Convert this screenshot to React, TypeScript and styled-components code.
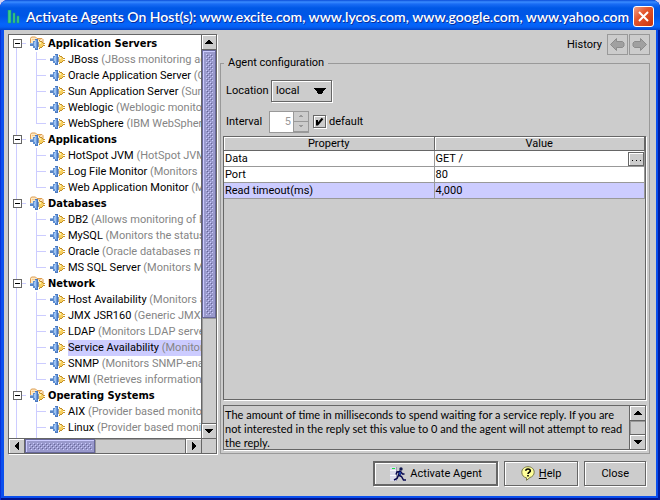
import React from 'react';
import styled, { createGlobalStyle, css } from 'styled-components';

const c = {
  face: '#cccccc',
  dark: '#666666',
  mid: '#999999',
  light: '#ffffff',
  purple: '#9999cc',
  purpleDark: '#666699',
  select: '#ccccff',
};

const Global = createGlobalStyle`
  *, *::before, *::after { box-sizing: border-box; }
  html { background: #d6d3f4; }
  body { margin: 0; font: 11px/14px Roboto, "Liberation Sans", sans-serif; color: #000; overflow: hidden; }
  button, input, select { font: inherit; color: inherit; margin: 0; padding: 0; border-radius: 0; }
  svg { display: block; flex: none; }
`;

const Window = styled.div`
  display: flex;
  flex-direction: column;
  height: 100vh;
  padding: 0 4px 4px;
  border-radius: 8px 8px 0 0;
  background: #0a4fee;
  box-shadow: inset 1px 0 #0831d9, inset -2px 0 #001ea0, inset 0 -2px #001590;
  overflow: hidden;
`;

const TitleBar = styled.header`
  display: flex;
  align-items: center;
  flex: none;
  height: 30px;
  margin: 0 -4px;
  padding: 3px 6px 0 7px;
  gap: 6px;
  color: #fff;
  background: linear-gradient(#0a4cd8 0, #3a8cff 2px, #1a6cf4 4px, #0058e6 8px, #0055e5 16px, #0465fb 24px, #0560f4 27px, #0044cc 30px);
`;

const Title = styled.h1`
  flex: 1;
  min-width: 0;
  margin: 0;
  font: 600 14px/18px Lato, sans-serif;
  white-space: nowrap;
  text-shadow: 1px 1px #0a2f9c;
`;

const CloseBox = styled.button`
  display: grid;
  place-items: center;
  flex: none;
  width: 21px;
  height: 21px;
  border: 1px solid #fff;
  border-radius: 3px;
  background: linear-gradient(135deg, #f0a088, #e4562e 40%, #c8330c);
`;

const Body = styled.main`
  display: flex;
  flex-direction: column;
  flex: 1;
  min-height: 0;
  padding: 4px 6px 10px 4px;
  background: ${c.face};
`;

const Columns = styled.div`
  display: flex;
  flex: 1;
  min-height: 0;
  gap: 3px;
`;

const etched = css`
  border: 1px solid ${c.dark};
  box-shadow: 1px 1px ${c.light};
`;

const TreePanel = styled.nav`
  ${etched}
  display: grid;
  grid-template: minmax(0, 1fr) 15px / minmax(0, 1fr) 15px;
  flex: none;
  width: 209px;
  background: ${c.face};
`;

const Tree = styled.ul`
  margin: 0;
  padding: 1px 0 0;
  list-style: none;
  overflow: hidden;
  background: #fff;
`;

const Branch = styled.ul`
  margin: 0;
  padding: 0;
  list-style: none;
`;

const TreeRow = styled.div`
  display: flex;
  align-items: center;
  height: 16px;
  white-space: nowrap;
`;

const line = `linear-gradient(${c.select}, ${c.select})`;

const Trunk = styled.span<{ $start?: boolean; $joint?: boolean }>`
  display: flex;
  align-items: center;
  flex: none;
  width: 20px;
  height: 16px;
  padding: 0 0 1px 4px;
  background: ${line} 7px ${p => (p.$start ? '8px' : '0')} / 1px 16px no-repeat,
    ${line} 13px 7px / ${p => (p.$joint ? '4px' : '0')} 1px no-repeat;
`;

const Elbow = styled.span<{ $last: boolean }>`
  flex: none;
  width: 20px;
  height: 16px;
  background: ${line} 7px 0 / 1px ${p => (p.$last ? '8px' : '16px')} no-repeat,
    ${line} 7px 7px / 10px 1px no-repeat;
`;

const Toggle = styled.button`
  display: grid;
  place-items: center;
  width: 9px;
  height: 9px;
  border: 1px solid ${c.dark};
  background: #fff;
`;

const GroupName = styled.strong`
  padding-left: 3px;
  font: bold 11px/16px "DejaVu Sans Condensed", "DejaVu Sans", sans-serif;
`;

const Leaf = styled.a<{ $selected: boolean }>`
  flex: 1;
  margin-left: 3px;
  line-height: 16px;
  color: #000;
  text-decoration: none;
  background: ${p => (p.$selected ? c.select : 'none')};
`;

const Note = styled.span`
  color: #858585;
`;

const ScrollBar = styled.div<{ $row?: boolean }>`
  display: flex;
  flex-direction: ${p => (p.$row ? 'row' : 'column')};
  min-width: 0;
  min-height: 0;
  border-${p => (p.$row ? 'top' : 'left')}: 1px solid ${c.dark};
`;

const Arrow = styled.button<{ $side: 'top' | 'bottom' | 'left' | 'right' }>`
  display: grid;
  place-items: center;
  flex: none;
  width: ${p => (p.$side === 'top' || p.$side === 'bottom' ? 'auto' : '16px')};
  height: ${p => (p.$side === 'top' || p.$side === 'bottom' ? '15px' : 'auto')};
  background: ${c.face};
  border: 0 solid ${c.dark};
  border-${p => ({ top: 'bottom', bottom: 'top', left: 'right', right: 'left' })[p.$side]}-width: 1px;
  box-shadow: inset 1px 1px ${c.light};
`;

const Thumb = styled.div<{ $grow: number }>`
  flex: ${p => p.$grow} 1 0;
  min-width: 0;
  min-height: 0;
  padding: 3px 2px 2px 3px;
  overflow: hidden;
  background: ${c.purple};
  border: 1px solid ${c.purpleDark};
  box-shadow: inset 1px 1px ${c.select};
`;

const Track = styled.div<{ $grow: number }>`
  flex: ${p => p.$grow} 1 0;
  box-shadow: inset 1px 1px ${c.mid};
`;

const Corner = styled.div`
  border: solid ${c.dark};
  border-width: 1px 0 0 1px;
`;

const Detail = styled.section`
  display: flex;
  flex-direction: column;
  flex: 1;
  min-width: 0;
`;

const History = styled.div`
  display: flex;
  align-items: center;
  justify-content: flex-end;
  flex: none;
  gap: 1px;
  height: 21px;
`;

const HistoryLabel = styled.span`
  margin-right: 4px;
`;

const HistoryButton = styled.button`
  display: grid;
  place-items: center;
  width: 21px;
  height: 21px;
  border: 1px solid ${c.mid};
  background: ${c.face};
`;

const Config = styled.fieldset`
  display: flex;
  flex-direction: column;
  flex: 1;
  min-width: 0;
  min-height: 0;
  margin: 1px 0 0;
  padding: 9px 3px 3px 2px;
  border: 1px solid ${c.mid};
`;

const Legend = styled.legend`
  margin-left: 1px;
  padding: 0 4px;
`;

const Field = styled.div`
  display: flex;
  align-items: center;
  flex: none;
  height: 23px;
  padding-left: 3px;
`;

const IntervalField = styled(Field)`
  margin-top: 8px;
`;

const FieldLabel = styled.label`
  width: 43px;
`;

const SelectBox = styled.span`
  display: grid;
  grid-template-columns: 1fr 17px;
  align-items: center;
  width: 61px;
  height: 22px;
  margin-left: 2px;
  border: 1px solid ${c.dark};
  box-shadow: inset 1px 1px ${c.light}, 1px 1px ${c.light};
  & > * { grid-row: 1; }
  & > svg { grid-column: 2; pointer-events: none; }
`;

const Select = styled.select`
  grid-column: 1 / 3;
  height: 20px;
  padding-left: 4px;
  border: 0;
  background: none;
  appearance: none;
`;

const Spinner = styled.span`
  display: grid;
  grid-template: 1fr 1fr / 1fr 15px;
  width: 40px;
  height: 22px;
  margin-right: 4px;
  border: 1px solid ${c.mid};
  box-shadow: inset -1px -1px ${c.mid};
`;

const SpinInput = styled.input`
  grid-row: 1 / 3;
  width: 100%;
  min-width: 0;
  padding-right: 2px;
  border: 0;
  text-align: right;
  color: ${c.mid};
  background: #fff;
  appearance: textfield;
`;

const SpinButton = styled.button`
  display: grid;
  place-items: center;
  border: 1px solid ${c.mid};
  border-width: 0 0 1px 1px;
  background: ${c.face};
`;

const Check = styled.input`
  appearance: none;
  width: 13px;
  height: 13px;
  margin: 0;
  border: 1px solid ${c.dark};
  box-shadow: inset 1px 1px ${c.light}, 1px 1px ${c.light};
`;

const CheckLabel = styled.label`
  display: grid;
  grid-template-columns: 16px auto;
  align-items: center;
  & > input, & > svg { grid-area: 1 / 1; }
  & > svg { margin-left: 2px; pointer-events: none; }
`;

const TableFrame = styled.div`
  ${etched}
  flex: 1;
  min-height: 0;
  margin-top: 3px;
  overflow: hidden;
`;

const Table = styled.table`
  width: 100%;
  border-collapse: separate;
  border-spacing: 0;
  table-layout: fixed;
`;

const Th = styled.th`
  height: 14px;
  padding: 0;
  font-weight: normal;
  line-height: 13px;
  border: solid ${c.dark};
  border-width: 0 1px 1px 0;
  box-shadow: inset 1px 1px ${c.light};
`;

const Tr = styled.tr<{ $selected?: boolean }>`
  background: ${p => (p.$selected ? c.select : '#fff')};
`;

const Td = styled.td`
  height: 16px;
  padding: 0 0 0 1px;
  line-height: 15px;
  border: solid ${c.mid};
  border-width: 0 1px 1px 0;
`;

const ValueCell = styled.div`
  display: flex;
  align-items: center;
  justify-content: space-between;
  height: 15px;
`;

const MoreButton = styled.button`
  display: grid;
  place-items: center;
  width: 16px;
  height: 14px;
  border: 1px solid ${c.dark};
  background: ${c.face};
  box-shadow: inset 1px 1px ${c.light};
`;

const Description = styled.div`
  ${etched}
  display: flex;
  flex: none;
  height: 45px;
  margin-top: 5px;
`;

const DescriptionScroll = styled(ScrollBar)`
  flex: none;
  width: 16px;
`;

const Explain = styled.p`
  flex: 1;
  min-width: 0;
  margin: 0;
  padding: 2px 0 0 1px;
  overflow: hidden;
  font-family: Lato, sans-serif;
`;

const Footer = styled.footer`
  display: flex;
  justify-content: flex-end;
  flex: none;
  gap: 6px;
  padding: 7px 4px 0 0;
`;

const Push = styled.button<{ $primary?: boolean }>`
  display: flex;
  align-items: center;
  justify-content: center;
  gap: 4px;
  height: 25px;
  padding: 0 ${p => (p.$primary ? '14px' : '16px')};
  background: ${c.face};
  border: ${p => (p.$primary ? 2 : 1)}px solid ${c.dark};
  box-shadow: inset 1px 1px ${c.light}, 1px 1px ${c.light};
`;

const Plug = () => (
  <g shapeRendering="crispEdges">
    <path d="M1 7h3v3H1z" fill="#5b86c4" />
    <path d="M1 7h3v1H1z" fill="#8fb4e6" />
    <path d="M4 5h2v7H4z" fill="#5f8fd2" />
    <path d="M6 3h3v11H6z" fill="#4a79c0" />
    <path d="M5 6h1v4H5zM6 4h1v8H6z" fill="#9cc2f2" />
    <path d="M7 4h1v9H7z" fill="#6c9adc" />
    <path d="M9 6h1v5H9z" fill="#8a94a8" />
    <path d="M10 4h1v9h-1zM11 5h1v7h-1zM12 5h1v7h-1zM13 6h1v5h-1z" fill="#c08c28" />
    <path d="M10 5h1v7h-1zM11 6h2v5h-2zM13 7h1v3h-1z" fill="#f8d060" />
    <path d="M10 6h2v2h-2z" fill="#fff0a8" />
    <path d="M14 7h2v1h-2zM14 9h2v1h-2z" fill="#c8962c" />
  </g>
);

const LeafIcon = () => (
  <svg width="16" height="16" viewBox="0 1 16 16" aria-hidden="true"><Plug /></svg>
);

const FolderIcon = () => (
  <svg width="16" height="16" viewBox="0 0 16 16" aria-hidden="true">
    <path d="M1.500 9.500v-7l1-1.500h4l1.500 1.500h5l1 1v6z" fill="#ffeac4" stroke="#dc9c50" />
    <path d="M3 3.500h9" stroke="#f8c888" />
    <Plug />
  </svg>
);

const Tri = ({ dir, size = 8, color = '#000' }: { dir: 'up' | 'down' | 'left' | 'right'; size?: number; color?: string }) => {
  const wide = dir === 'up' || dir === 'down';
  const d = { up: 'M3 0h2l3 4H0z', down: 'M0 0h8L5 4H3z', left: 'M4 0v8L0 5V3z', right: 'M0 0v8l4-3V3z' }[dir];
  return (
    <svg width={wide ? size : size / 2} height={wide ? size / 2 : size} viewBox={wide ? '0 0 8 4' : '0 0 4 8'} aria-hidden="true">
      <path d={d} fill={color} shapeRendering="crispEdges" />
    </svg>
  );
};

const Bumps = ({ id }: { id: string }) => (
  <svg width="100%" height="100%" aria-hidden="true">
    <defs>
      <pattern id={id} width="4" height="4" patternUnits="userSpaceOnUse">
        <path d="M0 0h1v1H0zM2 2h1v1H2z" fill="#ccccff" />
        <path d="M1 1h1v1H1zM3 3h1v1H3z" fill="#666699" />
      </pattern>
    </defs>
    <rect width="100%" height="100%" fill={`url(#${id})`} />
  </svg>
);

const HistoryArrow = ({ back }: { back?: boolean }) => (
  <svg width="15" height="13" viewBox="0 0 15 13" aria-hidden="true">
    <path
      d={back ? 'M.5 6.500l6-6v3h6l1.500 1.500v3l-1.500 1.500h-6v3z' : 'M14.500 6.500l-6-6v3h-6L1 5v3l1.500 1.500h6v3z'}
      fill="#a0a0a0"
      stroke="#8c8c8c"
    />
  </svg>
);

const RunnerIcon = () => (
  <svg width="17" height="16" viewBox="0 0 17 16" aria-hidden="true">
    <path d="M1 1h6v14H1z" fill="#dcdcec" />
    <path d="M1 4.500h6M1 9.500h6" stroke="#f8f8ff" />
    <path d="M7.500 1v14" stroke="#a0a0b4" />
    <path d="M3 2h3v1H3z" fill="#10e840" />
    <circle cx="12" cy="3" r="1.700" fill="#101850" />
    <path d="M11 4.500L9.500 9l3 1.500 2 3.500H17M9.500 9L8 12.500 5 14M11 5.500L8 6 7 8.500M11.500 5.500l2 2.500h2" fill="none" stroke="#080850" strokeWidth="1.500" />
    <path d="M10 6h2v3h-2z" fill="#2040a0" />
  </svg>
);

const HelpIcon = () => (
  <svg width="14" height="15" viewBox="0 0 14 15" aria-hidden="true">
    <path d="M7 .7c3.600 0 6.200 2.300 6.200 5.500 0 2.700-1.800 4.600-4.200 5.300L5.500 14.300v-2.500C2.700 11.300.8 9.300.8 6.200.8 3 3.400.7 7 .7z" fill="#ffff99" stroke="#77774a" />
    <path d="M4.800 4.800C4.800 3.500 5.700 3 7 3s2.300.7 2.300 1.900C9.300 6.300 7 6.300 7 8M7 9v1.500" fill="none" stroke="#000" strokeWidth="1.600" />
  </svg>
);

type Group = { name: string; items: [string, string][] };

const groups: Group[] = [
  { name: 'Application Servers', items: [['JBoss', '(JBoss monitoring agent)'], ['Oracle Application Server', '(Oracle monitoring)'], ['Sun Application Server', '(Sun monitoring)'], ['Weblogic', '(Weblogic monitoring agent)'], ['WebSphere', '(IBM WebSphere monitoring)']] },
  { name: 'Applications', items: [['HotSpot JVM', '(HotSpot JVM'], ['Log File Monitor', '(Monitors a log file)'], ['Web Application Monitor', '(Monitors web)']] },
  { name: 'Databases', items: [['DB2', '(Allows monitoring of DB2)'], ['MySQL', '(Monitors the status of MySQL)'], ['Oracle', '(Oracle databases monitoring)'], ['MS SQL Server', '(Monitors MS SQL)']] },
  { name: 'Network', items: [['Host Availability', '(Monitors a host)'], ['JMX JSR160', '(Generic JMX JSR160)'], ['LDAP', '(Monitors LDAP servers)'], ['Service Availability', '(Monitors'], ['SNMP', '(Monitors SNMP-enabled)'], ['WMI', '(Retrieves information']] },
  { name: 'Operating Systems', items: [['AIX', '(Provider based monitoring)'], ['Linux', '(Provider based monitoring)'], ['Solaris', '(Provider based monitoring)']] },
];

const properties = [
  { name: 'Data', value: 'GET /', more: true },
  { name: 'Port', value: '80' },
  { name: 'Read timeout(ms)', value: '4,000', selected: true },
];

const AgentTree = () => (
  <TreePanel aria-label="Agents">
    <Tree>
      {groups.map((g, gi) => (
        <li key={g.name}>
          <TreeRow>
            <Trunk $start={gi === 0} $joint>
              <Toggle aria-label={`Collapse ${g.name}`}>
                <svg width="5" height="1"><rect width="5" height="1" /></svg>
              </Toggle>
            </Trunk>
            <FolderIcon />
            <GroupName>{g.name}</GroupName>
          </TreeRow>
          <Branch>
            {g.items.map(([name, note], i) => (
              <li key={name}>
                <TreeRow>
                  <Trunk />
                  <Elbow $last={i === g.items.length - 1 && gi < groups.length - 1} />
                  <LeafIcon />
                  <Leaf href="#" $selected={name === 'Service Availability'}>
                    {name} <Note>{note}</Note>
                  </Leaf>
                </TreeRow>
              </li>
            ))}
          </Branch>
        </li>
      ))}
    </Tree>
    <ScrollBar>
      <Arrow $side="top" aria-label="Scroll up"><Tri dir="up" /></Arrow>
      <Thumb $grow={266}><Bumps id="bumps-v" /></Thumb>
      <Track $grow={107} />
      <Arrow $side="bottom" aria-label="Scroll down"><Tri dir="down" /></Arrow>
    </ScrollBar>
    <ScrollBar $row>
      <Arrow $side="left" aria-label="Scroll left"><Tri dir="left" /></Arrow>
      <Thumb $grow={66}><Bumps id="bumps-h" /></Thumb>
      <Track $grow={94} />
      <Arrow $side="right" aria-label="Scroll right"><Tri dir="right" /></Arrow>
    </ScrollBar>
    <Corner />
  </TreePanel>
);

const PropertyTable = () => (
  <TableFrame>
    <Table>
      <thead>
        <tr><Th>Property</Th><Th>Value</Th></tr>
      </thead>
      <tbody>
        {properties.map(p => (
          <Tr key={p.name} $selected={p.selected}>
            <Td>{p.name}</Td>
            <Td>
              <ValueCell>
                {p.value}
                {p.more && (
                  <MoreButton aria-label="Edit value">
                    <svg width="9" height="6" viewBox="0 0 9 6"><path d="M0 4h1v1H0zM4 4h1v1H4zM8 4h1v1H8z" /></svg>
                  </MoreButton>
                )}
              </ValueCell>
            </Td>
          </Tr>
        ))}
      </tbody>
    </Table>
  </TableFrame>
);

export default function App() {
  return (
    <>
      <Global />
      <Window>
        <TitleBar>
          <svg width="13" height="14" viewBox="0 0 13 14" aria-hidden="true">
            <path d="M1 0h3v13H1zM6 3h2v10H6zM10 6h2v7h-2z" fill="#3ccf88" stroke="#14a070" strokeWidth=".6" />
          </svg>
          <Title>Activate Agents On Host(s): www.excite.com, www.lycos.com, www.google.com, www.yahoo.com</Title>
          <CloseBox aria-label="Close window">
            <svg width="11" height="11" viewBox="0 0 11 11"><path d="M1 1l9 9M10 1l-9 9" stroke="#fff" strokeWidth="2" /></svg>
          </CloseBox>
        </TitleBar>
        <Body>
          <Columns>
            <AgentTree />
            <Detail>
              <History>
                <HistoryLabel>History</HistoryLabel>
                <HistoryButton disabled aria-label="Back"><HistoryArrow back /></HistoryButton>
                <HistoryButton disabled aria-label="Forward"><HistoryArrow /></HistoryButton>
              </History>
              <Config>
                <Legend>Agent configuration</Legend>
                <Field>
                  <FieldLabel htmlFor="location">Location</FieldLabel>
                  <SelectBox>
                    <Select id="location" defaultValue="local"><option>local</option></Select>
                    <Tri dir="down" size={12} />
                  </SelectBox>
                </Field>
                <IntervalField>
                  <FieldLabel htmlFor="interval">Interval</FieldLabel>
                  <Spinner>
                    <SpinInput id="interval" type="text" defaultValue="5" disabled />
                    <SpinButton disabled aria-label="Increase"><Tri dir="up" size={4} color="#999" /></SpinButton>
                    <SpinButton disabled aria-label="Decrease"><Tri dir="down" size={4} color="#999" /></SpinButton>
                  </Spinner>
                  <CheckLabel>
                    <Check type="checkbox" defaultChecked />
                    <svg width="9" height="9" viewBox="0 0 9 9"><path d="M2 3v5.500M2.500 7.500L7.500 1.500" stroke="#000" strokeWidth="2" fill="none" /></svg>
                    default
                  </CheckLabel>
                </IntervalField>
                <PropertyTable />
                <Description>
                  <Explain>
                    The amount of time in milliseconds to spend waiting for a service reply. If you are not
                    interested in the reply set this value to 0 and the agent will not attempt to read the reply.
                  </Explain>
                  <DescriptionScroll>
                    <Arrow $side="top" aria-label="Scroll up"><Tri dir="up" /></Arrow>
                    <Track $grow={1} />
                    <Arrow $side="bottom" aria-label="Scroll down"><Tri dir="down" /></Arrow>
                  </DescriptionScroll>
                </Description>
              </Config>
            </Detail>
          </Columns>
          <Footer>
            <Push $primary><RunnerIcon />Activate Agent</Push>
            <Push><HelpIcon /><span><u>H</u>elp</span></Push>
            <Push>Close</Push>
          </Footer>
        </Body>
      </Window>
    </>
  );
}
